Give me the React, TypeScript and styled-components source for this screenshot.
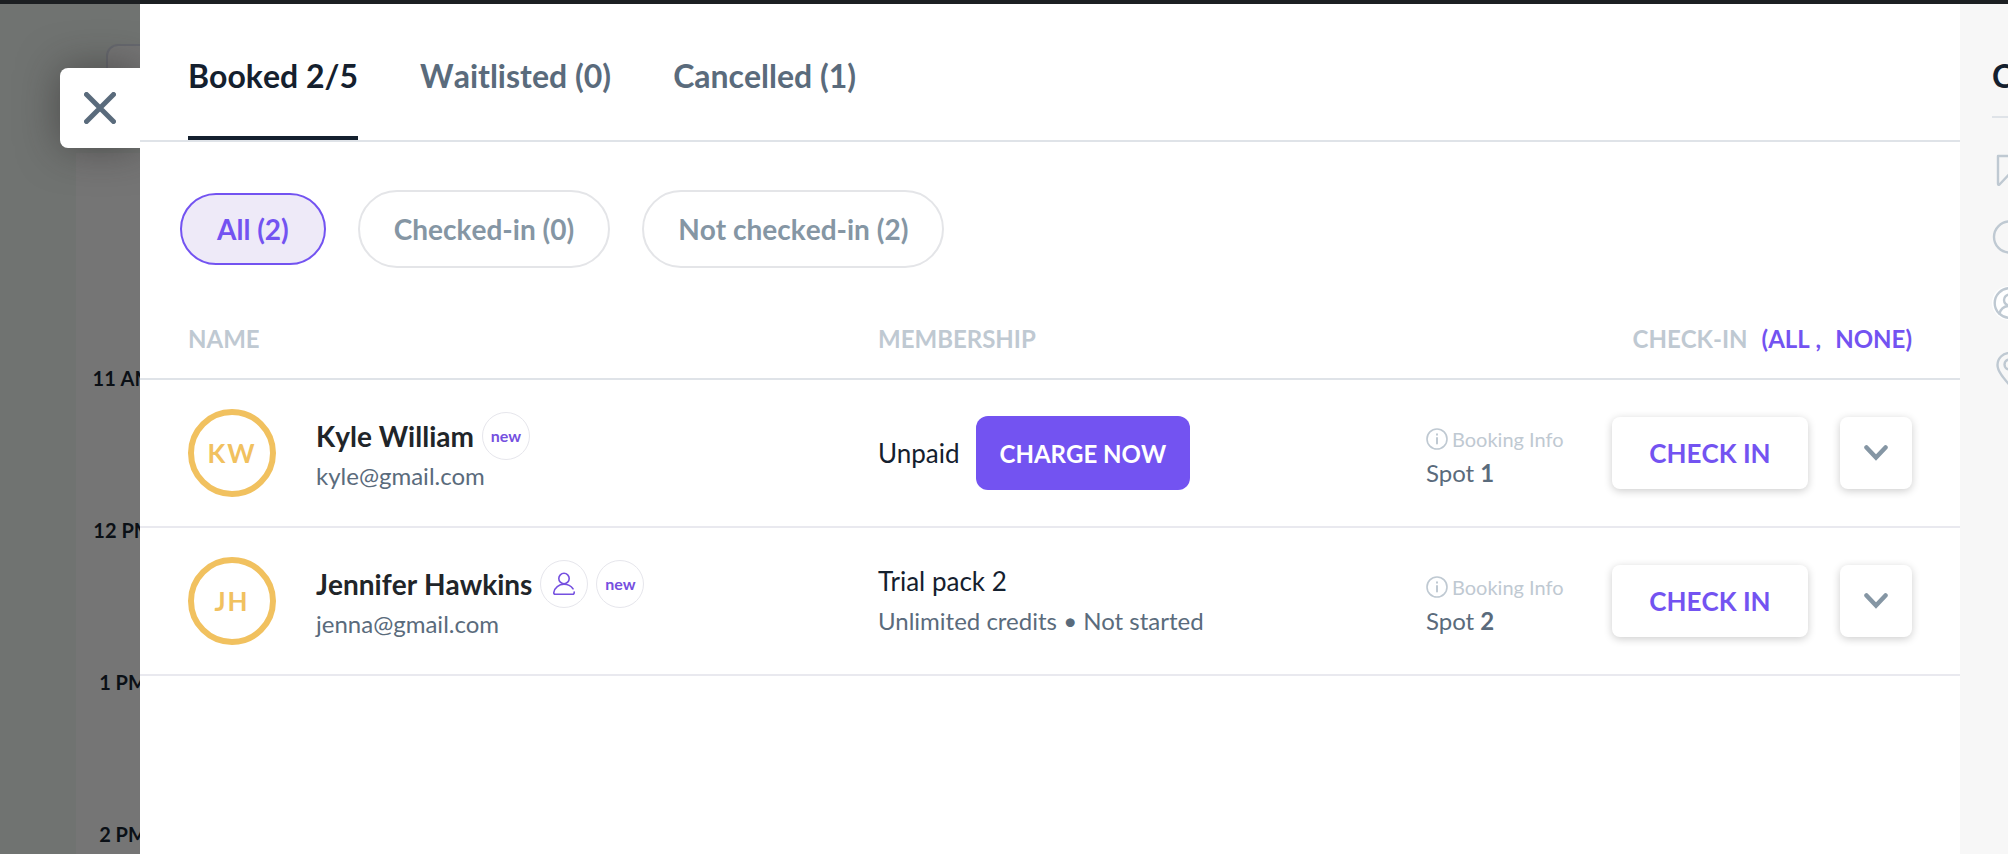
import React, { useState } from "react";
import styled, { createGlobalStyle } from "styled-components";

const color = {
  ink: "#14202e",
  slate: "#5a6b7c",
  muted: "#8596a4",
  faint: "#bfc9d2",
  line: "#dfe3e8",
  violet: "#7353f1",
  amber: "#f1c15f",
};

const GlobalStyle = createGlobalStyle`
  *, *::before, *::after { box-sizing: border-box; }
  body {
    margin: 0;
    font-family: Lato, "Liberation Sans", sans-serif;
    font-kerning: none;
    color: ${color.ink};
    background: #fff;
  }
  button { font-family: inherit; font-kerning: inherit; cursor: pointer; }
`;

const Page = styled.div`
  min-height: 100vh;
  display: flex;
  flex-direction: column;
`;

const TopBar = styled.div`
  height: 4px;
  background: #1c1f22;
`;

const Layout = styled.div`
  flex: 1;
  display: grid;
  grid-template-columns: 140px minmax(0, 1fr) 48px;
`;

const Backdrop = styled.aside`
  position: relative;
  display: grid;
  grid-template-columns: 76px 1fr;
  grid-template-rows: 149px 1fr;
  overflow: hidden;
  background: #707371;
`;

const DimmedCard = styled.div`
  position: absolute;
  top: 40px;
  left: 106px;
  width: 80px;
  height: 80px;
  border: 2px solid #66686e;
  border-radius: 12px;
  background: #757575;
`;

const Calendar = styled.div`
  grid-column: 2;
  grid-row: 2;
  background: #757575;
  padding-top: 209px;
`;

const Hour = styled.div`
  width: 94px;
  height: 152px;
  font-size: 20px;
  line-height: 32px;
  font-weight: 700;
  text-align: center;
  white-space: nowrap;
  color: #0b1016;

  &:last-child { height: 32px; }
`;

const CloseButton = styled.button`
  position: absolute;
  top: 64px;
  right: 0;
  width: 80px;
  height: 80px;
  padding: 0;
  display: grid;
  place-items: center;
  border: 0;
  border-radius: 8px 0 0 8px;
  background: #fff;
  color: ${color.slate};
  box-shadow: 0 0 40px rgba(40, 35, 35, 0.5);
`;

const Panel = styled.main`
  background: #fff;
`;

const Tabs = styled.nav`
  display: flex;
  gap: 62px;
  padding: 0 48px;
  border-bottom: 2px solid ${color.line};
`;

const Tab = styled.button<{ $active: boolean }>`
  height: 136px;
  padding: 12px 0 0;
  border: 0;
  border-bottom: 4px solid ${(p) => (p.$active ? color.ink : "transparent")};
  background: none;
  font-size: 32px;
  line-height: 40px;
  font-weight: 700;
  color: ${(p) => (p.$active ? color.ink : color.slate)};
`;

const Filters = styled.div`
  display: flex;
  align-items: center;
  gap: 32px;
  padding: 48px 40px 32px;
`;

const Pill = styled.button<{ $active: boolean }>`
  height: ${(p) => (p.$active ? 72 : 78)}px;
  padding: 0 ${(p) => (p.$active ? 35 : 34)}px;
  border: 2px solid ${(p) => (p.$active ? color.violet : "#e4e5e8")};
  border-radius: 40px;
  background: ${(p) => (p.$active ? "#eeeaf8" : "#fff")};
  color: ${(p) => (p.$active ? color.violet : color.muted)};
  font-size: 28px;
  line-height: 32px;
  font-weight: 700;
`;

const Table = styled.table`
  width: 100%;
  table-layout: fixed;
  border-spacing: 0;
`;

const PlanCol = styled.col`
  width: 548px;
`;

const ActionCol = styled.col`
  width: 534px;
`;

const Head = styled.th<{ $end?: boolean }>`
  height: 80px;
  padding: 0 ${(p) => (p.$end ? 48 : 0)}px 0 0;
  border-bottom: 2px solid ${color.line};
  font-size: 24px;
  line-height: 32px;
  font-weight: 700;
  text-align: ${(p) => (p.$end ? "right" : "left")};
  color: ${color.faint};

  &:first-child { padding-left: 48px; }
`;

const BulkActions = styled.span`
  margin-left: 14px;
  color: ${color.violet};
`;

const BulkButton = styled.button`
  padding: 0;
  border: 0;
  background: none;
  font-size: 24px;
  line-height: 32px;
  font-weight: 700;
  color: inherit;

  & + & { margin-left: 14px; }
`;

const Cell = styled.td`
  height: 148px;
  padding: 0;
  border-bottom: 2px solid #e9e9ef;

  &:first-child { padding-left: 48px; }
`;

const Person = styled.div`
  display: flex;
  align-items: center;
  gap: 40px;
`;

const Contact = styled.div`
  padding-bottom: 2px;
`;

const Avatar = styled.div`
  width: 88px;
  height: 88px;
  display: grid;
  place-items: center;
  border: 6px solid ${color.amber};
  border-radius: 50%;
  font-size: 26px;
  font-weight: 700;
  letter-spacing: 2px;
  color: ${color.amber};
`;

const NameLine = styled.div`
  display: flex;
  align-items: center;
  gap: 8px;
  height: 48px;
  font-size: 28px;
  font-weight: 700;
  color: #212529;
`;

const Badge = styled.span`
  width: 48px;
  height: 48px;
  display: grid;
  place-items: center;
  border: 1px solid #e6e6ec;
  border-radius: 50%;
  font-size: 16px;
  line-height: 20px;
  font-weight: 700;
  color: #7550e0;
`;

const Secondary = styled.div`
  font-size: 24px;
  line-height: 32px;
  font-kerning: normal;
  color: ${color.slate};
`;

const Plan = styled.div`
  display: flex;
  align-items: center;
  gap: 16px;
  font-size: 26px;
  line-height: 32px;
  font-kerning: normal;
`;

const PlanStack = styled.div`
  display: grid;
  gap: 8px;
`;

const ChargeButton = styled.button`
  height: 74px;
  padding: 0 24px;
  border: 0;
  border-radius: 12px;
  background: ${color.violet};
  color: #fff;
  font-size: 24px;
  font-weight: 700;
  font-kerning: none;
`;

const Actions = styled.div`
  display: flex;
  align-items: center;
  gap: 32px;
  padding-right: 48px;
`;

const Booking = styled.div`
  flex: 1;
  display: grid;
  gap: 2px;
  padding-top: 6px;
`;

const InfoButton = styled.button`
  display: flex;
  align-items: center;
  gap: 4px;
  padding: 0;
  border: 0;
  background: none;
  font-size: 20px;
  line-height: 32px;
  font-kerning: normal;
  color: ${color.faint};
`;

const RaisedButton = styled.button<{ $square?: boolean }>`
  width: ${(p) => (p.$square ? 72 : 196)}px;
  height: 72px;
  padding: 0;
  display: grid;
  place-items: center;
  border: 0;
  border-radius: 8px;
  background: #fff;
  box-shadow: 0 2px 8px rgba(0, 0, 0, 0.2);
  color: ${(p) => (p.$square ? color.muted : color.violet)};
  font-size: 26px;
  font-weight: 700;
`;

const Details = styled.aside`
  overflow: hidden;
  padding: 48px 0 0 32px;
  background: #f7f7f7;
  color: ${color.faint};
`;

const DetailsTitle = styled.h2`
  width: 320px;
  height: 66px;
  margin: 0;
  border-bottom: 2px solid ${color.line};
  font-size: 32px;
  line-height: 48px;
  font-weight: 700;
  color: ${color.ink};
`;

const DetailIcons = styled.div`
  display: grid;
  gap: 32px;
  padding-top: 36px;
`;

const hours = ["11 AM", "12 PM", "1 PM", "2 PM"];
const tabs = ["Booked 2/5", "Waitlisted (0)", "Cancelled (1)"];
const filters = ["All (2)", "Checked-in (0)", "Not checked-in (2)"];

const stroke = {
  fill: "none",
  stroke: "currentColor",
  strokeLinecap: "round",
  strokeLinejoin: "round",
} as const;

const CloseIcon = () => (
  <svg width="32" height="32" viewBox="0 0 32 32" {...stroke} strokeWidth="5">
    <path d="M2.5 2.5l27 27M29.5 2.5l-27 27" />
  </svg>
);

const ChevronIcon = () => (
  <svg width="24" height="18" viewBox="0 0 24 18" {...stroke} strokeWidth="4.5" strokeLinejoin="miter">
    <path d="M2.5 3.5L12 13.5l9.5-10" />
  </svg>
);

const InfoIcon = () => (
  <svg width="22" height="22" viewBox="0 0 22 22" {...stroke} strokeWidth="1.6">
    <circle cx="11" cy="11" r="10" />
    <path d="M11 10v5.5M11 6.3v.4" strokeWidth="2" />
  </svg>
);

const MemberIcon = () => (
  <svg width="24" height="24" viewBox="-1 -1 24 24" {...stroke} strokeWidth="1.6">
    <circle cx="11" cy="5.500" r="5.2" />
    <path d="M20 15.800C18 13 15 11.300 11 11.300C6 11.300 1.500 14.500 .8 19.500C.7 20.800 1.300 21.200 2.200 21.200H19.500C20.800 21.200 21.300 20.500 21.200 19" />
  </svg>
);

const BookmarkIcon = () => (
  <svg width="34" height="34" viewBox="0 0 34 34" {...stroke} strokeWidth="2.4">
    <path d="M6 2h22v29L17 20.500 7.500 30.500Q6 31.500 6 29.500Z" />
  </svg>
);

const ClockIcon = () => (
  <svg width="34" height="34" viewBox="0 0 34 34" {...stroke} strokeWidth="2.4">
    <circle cx="17.500" cy="17" r="15.500" />
  </svg>
);

const UserIcon = () => (
  <svg width="34" height="34" viewBox="0 0 34 34" {...stroke} strokeWidth="2.4">
    <circle cx="17" cy="17" r="17" fill="#fff" stroke="none" />
    <circle cx="17.500" cy="17" r="14.800" />
    <circle cx="17.500" cy="14" r="5.500" />
    <path d="M7.500 27.500C9 22 13 20 17.500 20s8.500 2 10 7.500" />
  </svg>
);

const PinIcon = () => (
  <svg width="34" height="34" viewBox="0 0 34 34" {...stroke} strokeWidth="2.4">
    <path d="M17.500 33C11 25.500 5.500 19 5.500 13a12 12 0 0 1 24 0c0 6-5.500 12.500-12 20Z" />
    <circle cx="17.500" cy="12.500" r="5" />
  </svg>
);

type BookingRow = {
  initials: string;
  name: string;
  email: string;
  member?: boolean;
  plan: string;
  planNote?: string;
  spot: number;
};

const bookings: BookingRow[] = [
  { initials: "KW", name: "Kyle William", email: "kyle@gmail.com", plan: "Unpaid", spot: 1 },
  {
    initials: "JH",
    name: "Jennifer Hawkins",
    email: "jenna@gmail.com",
    member: true,
    plan: "Trial pack 2",
    planNote: "Unlimited credits • Not started",
    spot: 2,
  },
];

const BookingLine = ({ row }: { row: BookingRow }) => (
  <tr>
    <Cell>
      <Person>
        <Avatar>{row.initials}</Avatar>
        <Contact>
          <NameLine>
            {row.name}
            {row.member && (
              <Badge>
                <MemberIcon />
              </Badge>
            )}
            <Badge>new</Badge>
          </NameLine>
          <Secondary>{row.email}</Secondary>
        </Contact>
      </Person>
    </Cell>
    <Cell>
      {row.planNote ? (
        <PlanStack>
          <Plan>{row.plan}</Plan>
          <Secondary>{row.planNote}</Secondary>
        </PlanStack>
      ) : (
        <Plan>
          {row.plan}
          <ChargeButton type="button">CHARGE NOW</ChargeButton>
        </Plan>
      )}
    </Cell>
    <Cell>
      <Actions>
        <Booking>
          <InfoButton type="button">
            <InfoIcon />
            Booking Info
          </InfoButton>
          <Secondary>
            Spot <b>{row.spot}</b>
          </Secondary>
        </Booking>
        <RaisedButton type="button">CHECK IN</RaisedButton>
        <RaisedButton type="button" $square aria-label="More actions">
          <ChevronIcon />
        </RaisedButton>
      </Actions>
    </Cell>
  </tr>
);

export default function App() {
  const [tab, setTab] = useState(0);
  const [filter, setFilter] = useState(0);

  return (
    <>
      <GlobalStyle />
      <Page>
        <TopBar />
        <Layout>
          <Backdrop>
            <DimmedCard />
            <Calendar>
              {hours.map((h) => (
                <Hour key={h}>{h}</Hour>
              ))}
            </Calendar>
            <CloseButton type="button" aria-label="Close">
              <CloseIcon />
            </CloseButton>
          </Backdrop>
          <Panel>
            <Tabs>
              {tabs.map((label, i) => (
                <Tab key={label} type="button" $active={i === tab} onClick={() => setTab(i)}>
                  {label}
                </Tab>
              ))}
            </Tabs>
            <Filters>
              {filters.map((label, i) => (
                <Pill key={label} type="button" $active={i === filter} onClick={() => setFilter(i)}>
                  {label}
                </Pill>
              ))}
            </Filters>
            <Table>
              <colgroup>
                <col />
                <PlanCol />
                <ActionCol />
              </colgroup>
              <thead>
                <tr>
                  <Head scope="col">NAME</Head>
                  <Head scope="col">MEMBERSHIP</Head>
                  <Head scope="col" $end>
                    CHECK-IN
                    <BulkActions>
                      <BulkButton type="button">(ALL ,</BulkButton>
                      <BulkButton type="button">NONE)</BulkButton>
                    </BulkActions>
                  </Head>
                </tr>
              </thead>
              <tbody>
                {bookings.map((row) => (
                  <BookingLine key={row.email} row={row} />
                ))}
              </tbody>
            </Table>
          </Panel>
          <Details>
            <DetailsTitle>C</DetailsTitle>
            <DetailIcons>
              <BookmarkIcon />
              <ClockIcon />
              <UserIcon />
              <PinIcon />
            </DetailIcons>
          </Details>
        </Layout>
      </Page>
    </>
  );
}
